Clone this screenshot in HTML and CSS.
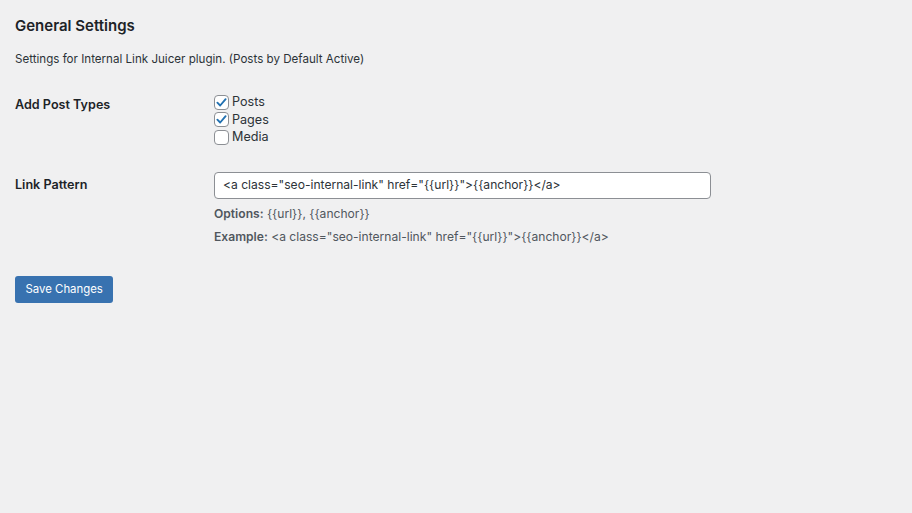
FILE: index.html
```html
<!DOCTYPE html>
<html>
<head>
<meta charset="utf-8">
<link rel="stylesheet" href="styles.css">
</head>
<body>
<div class="wrap">
  <h2 class="title">General Settings</h2>
  <p class="desc">Settings for Internal Link Juicer plugin. (Posts by Default Active)</p>
  <div class="form">
    <div class="row row-types">
      <div class="label">Add Post Types</div>
      <div class="field checks">
        <label class="check"><span class="box checked"><svg viewBox="0 0 16 16" width="16" height="16"><path d="M3.6 8.2 L6.6 11.2 L12.4 4.4" fill="none" stroke="#2271b1" stroke-width="2" stroke-linecap="round" stroke-linejoin="round"/></svg></span>Posts</label>
        <label class="check"><span class="box checked"><svg viewBox="0 0 16 16" width="16" height="16"><path d="M3.6 8.2 L6.6 11.2 L12.4 4.4" fill="none" stroke="#2271b1" stroke-width="2" stroke-linecap="round" stroke-linejoin="round"/></svg></span>Pages</label>
        <label class="check"><span class="box"></span>Media</label>
      </div>
    </div>
    <div class="row row-pattern">
      <div class="label">Link Pattern</div>
      <div class="field">
        <div class="input">&lt;a class="seo-internal-link" href="{{url}}"&gt;{{anchor}}&lt;/a&gt;</div>
        <p class="hint"><b>Options:</b> {{url}}, {{anchor}}</p>
        <p class="hint"><b>Example:</b> &lt;a class="seo-internal-link" href="{{url}}"&gt;{{anchor}}&lt;/a&gt;</p>
      </div>
    </div>
  </div>
  <div class="submit"><span class="button">Save Changes</span></div>
</div>
</body>
</html>
```
FILE: styles.css
```css
html, body {
  margin: 0;
  padding: 0;
  background: #f0f0f1;
  color: #1d2327;
  font-family: Inter, "Liberation Sans", sans-serif;
  font-size: 13px;
  line-height: 1.4;
}
.wrap {
  padding: 15px 15px 0 15px;
}
.title {
  margin: 0;
  font-size: 15px;
  font-weight: 600;
  line-height: 22px;
  color: #1d2327;
}
.desc {
  margin: 13px 0 0 0;
  font-size: 11.6px;
  line-height: 18px;
  color: #2c3338;
}
.form {
  margin-top: 26px;
}
.row {
  display: grid;
  grid-template-columns: 199px 497px;
}
.label {
  font-weight: 600;
  font-size: 12.6px;
  line-height: 18px;
}
.row-types .label {
  padding-top: 2px;
}
.checks {
  display: flex;
  flex-direction: column;
  gap: 1.5px;
}
.check {
  display: flex;
  align-items: center;
  gap: 3px;
  font-size: 12.6px;
  line-height: 16px;
  color: #2c3338;
}
.box {
  width: 13px;
  height: 13px;
  border: 1px solid #8c8f94;
  border-radius: 4px;
  background: #fff;
  display: flex;
  align-items: center;
  justify-content: center;
  overflow: hidden;
  box-sizing: content-box;
}
.box svg {
  width: 15px;
  height: 15px;
  flex: none;
}
.row-pattern {
  margin-top: 27px;
}
.row-pattern .label {
  padding-top: 4px;
}
.input {
  box-sizing: border-box;
  height: 27px;
  border: 1px solid #8c8f94;
  border-radius: 4px;
  background: #fff;
  padding: 0 8px;
  display: flex;
  align-items: center;
  font-size: 12.1px;
  color: #2c3338;
}
.hint {
  margin: 6px 0 0 0;
  font-size: 12.1px;
  line-height: 17px;
  color: #50575e;
}
.hint + .hint {
  margin-top: 6px;
}
.hint b {
  font-weight: 600;
}
.submit {
  margin-top: 31px;
}
.button {
  display: inline-flex;
  align-items: center;
  height: 27px;
  box-sizing: border-box;
  padding: 0 10.5px;
  background: #3872b0;
  color: #fff;
  border-radius: 3px;
  font-size: 11.4px;
}
```
